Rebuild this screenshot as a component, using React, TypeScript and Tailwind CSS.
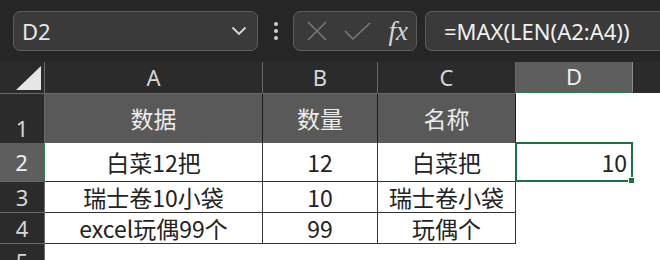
import React from "react";

const cjk = { fontFamily: '"Noto Sans CJK SC", "Noto Sans", sans-serif' };
const latin = { fontFamily: '"Noto Sans", sans-serif' };

type Row = { n: string; h: string; cells: string[] };

const rows: Row[] = [
    { n: "2", h: "h-[39px]", cells: ["白菜12把", "12", "白菜把"] },
    { n: "3", h: "h-[31px]", cells: ["瑞士卷10小袋", "10", "瑞士卷小袋"] },
    { n: "4", h: "h-[31px]", cells: ["excel玩偶99个", "99", "玩偶个"] },
];

const widths = ["w-[218px]", "w-[115px]", "w-[138px]"];

export default function App() {
    return (
        <div className="w-[660px] h-[260px] overflow-hidden bg-white flex flex-col" style={cjk}>
            {/* formula bar */}
            <div className="h-[62px] bg-[#262626] flex items-start pt-[11px] pl-[13px] shrink-0">
                <div className="w-[245px] h-[40px] rounded-[7px] bg-[#3a3a3a] border border-[#5c5c5c] flex items-center justify-between pl-[8px] pr-[10px]">
                    <span className="text-[22px] text-[#e8e8e8]" style={latin}>D2</span>
                    <svg width="16" height="10" viewBox="0 0 16 10">
                        <path d="M1.5 1.5 L8 8 L14.5 1.5" fill="none" stroke="#d8d8d8" strokeWidth="1.8" />
                    </svg>
                </div>
                <div className="w-[35px] h-[40px] flex flex-col items-center justify-center gap-[3px]">
                    <span className="w-[4px] h-[4px] rounded-full bg-[#cfcfcf]" />
                    <span className="w-[4px] h-[4px] rounded-full bg-[#cfcfcf]" />
                    <span className="w-[4px] h-[4px] rounded-full bg-[#cfcfcf]" />
                </div>
                <div className="w-[124px] h-[40px] rounded-[7px] bg-[#3a3a3a] border border-[#5c5c5c] flex items-center pl-[12px] pr-[8px] justify-between">
                    <svg width="22" height="22" viewBox="0 0 22 22">
                        <path d="M2 2 L20 20 M20 2 L2 20" stroke="#7a7a7a" strokeWidth="1.5" />
                    </svg>
                    <svg width="28" height="20" viewBox="0 0 28 20">
                        <path d="M1 10 L9 18 L26 2" fill="none" stroke="#7a7a7a" strokeWidth="1.5" />
                    </svg>
                    <span className="text-[27px] leading-none italic text-[#d4d4d4]" style={{ fontFamily: '"Liberation Serif", serif' }}>
                        fx
                    </span>
                </div>
                <div className="ml-[8px] flex-1 h-[40px] rounded-l-[7px] bg-[#3a3a3a] border border-r-0 border-[#5c5c5c] flex items-center pl-[18px]">
                    <span className="text-[22px] text-[#f0f0f0]" style={latin}>
                        =MAX(LEN(A2:A4))
                    </span>
                </div>
            </div>

            {/* column headers */}
            <div className="h-[31px] bg-[#2b2b2b] flex shrink-0 text-[22px] text-[#d6d6d6]" style={latin}>
                <div className="w-[45px] border-r border-[#6a6a6a] flex items-end justify-end pr-[2px] pb-[3px]">
                    <svg width="26" height="24" viewBox="0 0 26 24">
                        <path d="M25 0 L25 24 L0 24 Z" fill="#e6e6e6" />
                    </svg>
                </div>
                <div className="w-[218px] border-r border-[#6a6a6a] flex items-center justify-center">A</div>
                <div className="w-[115px] border-r border-[#6a6a6a] flex items-center justify-center">B</div>
                <div className="w-[138px] border-r border-[#6a6a6a] flex items-center justify-center">C</div>
                <div className="w-[117px] bg-[#5e5e5e] border-r border-[#8a8a8a] border-b-2 border-b-[#2d7a52] flex items-center justify-center text-[#f0f0f0]">
                    D
                </div>
                <div className="flex-1" />
            </div>

            {/* row 1: headers */}
            <div className="h-[50px] flex shrink-0">
                <div
                    className="w-[45px] bg-[#2b2b2b] border-t border-[#6a6a6a] border-r border-r-[#6a6a6a] flex items-end justify-center text-[22px] leading-[30px] text-[#d6d6d6]"
                    style={latin}
                >
                    1
                </div>
                {["数据", "数量", "名称"].map((t, i) => (
                    <div
                        key={t}
                        className={`${widths[i]} bg-[#595959] border-t border-t-[#6a6a6a] border-r border-[#1e1e1e] flex items-center justify-center text-[23px] text-[#ececec]`}
                    >
                        {t}
                    </div>
                ))}
                <div className="flex-1" />
            </div>

            {/* data rows */}
            {rows.map((r) => (
                <div key={r.n} className={`${r.h} flex shrink-0`}>
                    <div
                        className={
                            "w-[45px] flex items-center justify-center text-[22px] border-b border-[#6a6a6a] " +
                            (r.n === "2"
                                ? "bg-[#5e5e5e] text-[#f0f0f0] border-r-2 border-r-[#2d7a52]"
                                : "bg-[#2b2b2b] text-[#d6d6d6] border-r border-r-[#6a6a6a]")
                        }
                        style={latin}
                    >
                        {r.n}
                    </div>
                    {r.cells.map((c, i) => (
                        <div
                            key={i}
                            className={`${widths[i]} border-r border-b border-[#333333] flex items-center justify-center text-[23px] leading-none text-[#222222]`}
                        >
                            {c}
                        </div>
                    ))}
                    {r.n === "2" ? (
                        <div className="relative w-[118px] -ml-px -mt-px h-[40px] border-2 border-[#1f6e46] flex items-center justify-end pr-[4px] text-[23px] text-[#222222]">
                            10
                            <span className="absolute -right-[4px] -bottom-[4px] w-[7px] h-[7px] bg-[#1f6e46] border border-white" />
                        </div>
                    ) : null}
                    <div className="flex-1" />
                </div>
            ))}

            {/* row 5 */}
            <div className="flex-1 flex">
                <div
                    className="w-[45px] bg-[#2b2b2b] border-r border-[#6a6a6a] flex justify-center pt-[2px] text-[22px] leading-[30px] text-[#d6d6d6]"
                    style={latin}
                >
                    5
                </div>
                <div className="flex-1" />
            </div>
        </div>
    );
}
